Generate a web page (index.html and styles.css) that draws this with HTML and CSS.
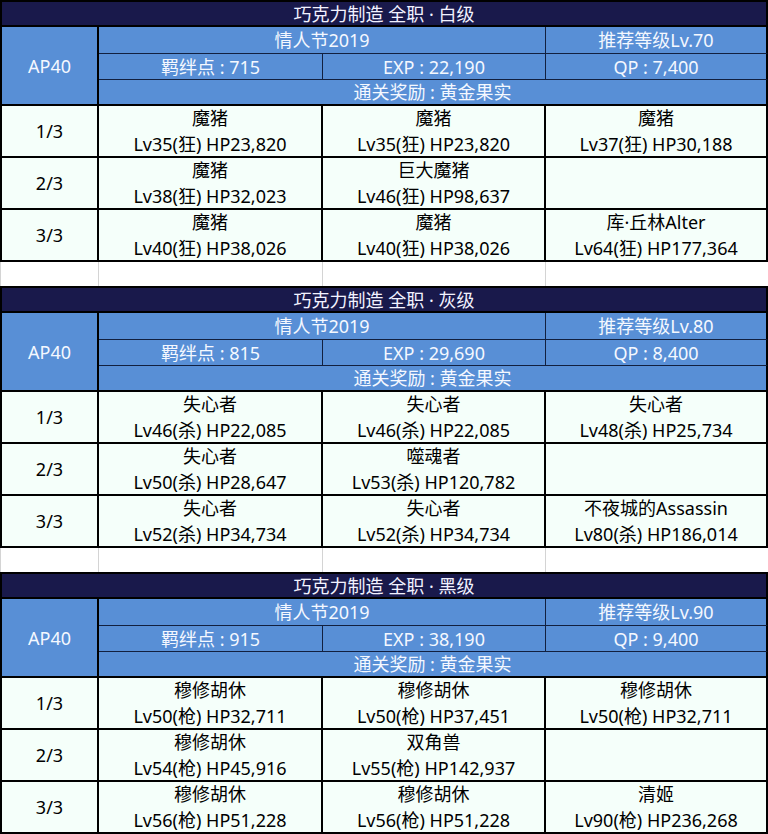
FILE: index.html
```html
<!DOCTYPE html>
<html lang="zh-CN">
<head>
<meta charset="utf-8">
<title>巧克力制造</title>
<link rel="stylesheet" href="styles.css">
</head>
<body>
<main class="page">

<section class="block">
  <div class="sheet">
    <div class="cell title">巧克力制造 全职 · 白级</div>
    <div class="cell hdr ap">AP40</div>
    <div class="cell hdr event">情人节2019</div>
    <div class="cell hdr rec">推荐等级Lv.70</div>
    <div class="cell hdr bond">羁绊点 : 715</div>
    <div class="cell hdr exp">EXP : 22,190</div>
    <div class="cell hdr qp">QP : 7,400</div>
    <div class="cell hdr reward">通关奖励 : 黄金果实</div>

    <div class="cell data wave">1/3</div>
    <div class="cell data"><span>魔猪</span><span>Lv35(狂) HP23,820</span></div>
    <div class="cell data"><span>魔猪</span><span>Lv35(狂) HP23,820</span></div>
    <div class="cell data"><span>魔猪</span><span>Lv37(狂) HP30,188</span></div>

    <div class="cell data wave">2/3</div>
    <div class="cell data"><span>魔猪</span><span>Lv38(狂) HP32,023</span></div>
    <div class="cell data"><span>巨大魔猪</span><span>Lv46(狂) HP98,637</span></div>
    <div class="cell data"></div>

    <div class="cell data wave">3/3</div>
    <div class="cell data"><span>魔猪</span><span>Lv40(狂) HP38,026</span></div>
    <div class="cell data"><span>魔猪</span><span>Lv40(狂) HP38,026</span></div>
    <div class="cell data"><span>库·丘林Alter</span><span>Lv64(狂) HP177,364</span></div>
  </div>
  <div class="spacer"><div></div><div></div><div></div><div></div></div>
</section>

<section class="block">
  <div class="sheet">
    <div class="cell title">巧克力制造 全职 · 灰级</div>
    <div class="cell hdr ap">AP40</div>
    <div class="cell hdr event">情人节2019</div>
    <div class="cell hdr rec">推荐等级Lv.80</div>
    <div class="cell hdr bond">羁绊点 : 815</div>
    <div class="cell hdr exp">EXP : 29,690</div>
    <div class="cell hdr qp">QP : 8,400</div>
    <div class="cell hdr reward">通关奖励 : 黄金果实</div>

    <div class="cell data wave">1/3</div>
    <div class="cell data"><span>失心者</span><span>Lv46(杀) HP22,085</span></div>
    <div class="cell data"><span>失心者</span><span>Lv46(杀) HP22,085</span></div>
    <div class="cell data"><span>失心者</span><span>Lv48(杀) HP25,734</span></div>

    <div class="cell data wave">2/3</div>
    <div class="cell data"><span>失心者</span><span>Lv50(杀) HP28,647</span></div>
    <div class="cell data"><span>噬魂者</span><span>Lv53(杀) HP120,782</span></div>
    <div class="cell data"></div>

    <div class="cell data wave">3/3</div>
    <div class="cell data"><span>失心者</span><span>Lv52(杀) HP34,734</span></div>
    <div class="cell data"><span>失心者</span><span>Lv52(杀) HP34,734</span></div>
    <div class="cell data"><span>不夜城的Assassin</span><span>Lv80(杀) HP186,014</span></div>
  </div>
  <div class="spacer"><div></div><div></div><div></div><div></div></div>
</section>

<section class="block">
  <div class="sheet">
    <div class="cell title">巧克力制造 全职 · 黑级</div>
    <div class="cell hdr ap">AP40</div>
    <div class="cell hdr event">情人节2019</div>
    <div class="cell hdr rec">推荐等级Lv.90</div>
    <div class="cell hdr bond">羁绊点 : 915</div>
    <div class="cell hdr exp">EXP : 38,190</div>
    <div class="cell hdr qp">QP : 9,400</div>
    <div class="cell hdr reward">通关奖励 : 黄金果实</div>

    <div class="cell data wave">1/3</div>
    <div class="cell data"><span>穆修胡休</span><span>Lv50(枪) HP32,711</span></div>
    <div class="cell data"><span>穆修胡休</span><span>Lv50(枪) HP37,451</span></div>
    <div class="cell data"><span>穆修胡休</span><span>Lv50(枪) HP32,711</span></div>

    <div class="cell data wave">2/3</div>
    <div class="cell data"><span>穆修胡休</span><span>Lv54(枪) HP45,916</span></div>
    <div class="cell data"><span>双角兽</span><span>Lv55(枪) HP142,937</span></div>
    <div class="cell data"></div>

    <div class="cell data wave">3/3</div>
    <div class="cell data"><span>穆修胡休</span><span>Lv56(枪) HP51,228</span></div>
    <div class="cell data"><span>穆修胡休</span><span>Lv56(枪) HP51,228</span></div>
    <div class="cell data"><span>清姬</span><span>Lv90(枪) HP236,268</span></div>
  </div>
  <div class="spacer"><div></div><div></div><div></div><div></div></div>
</section>

</main>
</body>
</html>
```

FILE: styles.css
```css
html, body {
  margin: 0;
  padding: 0;
  height: 834px;
  overflow: hidden;
  background: #ffffff;
}

.page {
  width: 768px;
  font-family: "Noto Sans", "Noto Sans CJK SC", sans-serif;
  font-size: 18px;
  color: #000;
}

.block {
  display: flex;
  flex-direction: column;
}

.sheet {
  display: grid;
  grid-template-columns: 97px 224px 223px 222px;
  grid-template-rows: 25px 27px 26px 26px 52px 52px 52px;
  border-top: 2px solid #000;
  border-left: 2px solid #000;
}

.cell {
  display: flex;
  align-items: center;
  justify-content: center;
  border-right: 2px solid #000;
  border-bottom: 2px solid #000;
  line-height: 26px;
  white-space: nowrap;
  overflow: hidden;
}

.title {
  grid-column: 1 / 5;
  grid-row: 1;
  background: #19194b;
  color: #f2f2ff;
}

.hdr {
  background: #588fd6;
  color: #f4f8ff;
}

.ap {
  grid-column: 1;
  grid-row: 2 / 5;
}

.event {
  grid-column: 2 / 4;
  grid-row: 2;
  border-right: 1px solid #12203f;
  border-bottom: 1px solid #12203f;
}

.rec {
  grid-column: 4;
  grid-row: 2;
  border-bottom: 1px solid #12203f;
}

.bond {
  grid-column: 2;
  grid-row: 3;
  border-right: 1px solid #12203f;
  border-bottom: 1px solid #12203f;
}

.exp {
  grid-column: 3;
  grid-row: 3;
  border-right: 1px solid #12203f;
  border-bottom: 1px solid #12203f;
}

.qp {
  grid-column: 4;
  grid-row: 3;
  border-bottom: 1px solid #12203f;
}

.reward {
  grid-column: 2 / 5;
  grid-row: 4;
}

.data {
  background: #f5fffa;
  flex-direction: column;
}

.spacer {
  display: grid;
  grid-template-columns: 98px 224px 223px 223px;
  height: 24px;
}

.spacer div {
  border-left: 1px solid #d4d4d4;
  background: #fff;
}
```
